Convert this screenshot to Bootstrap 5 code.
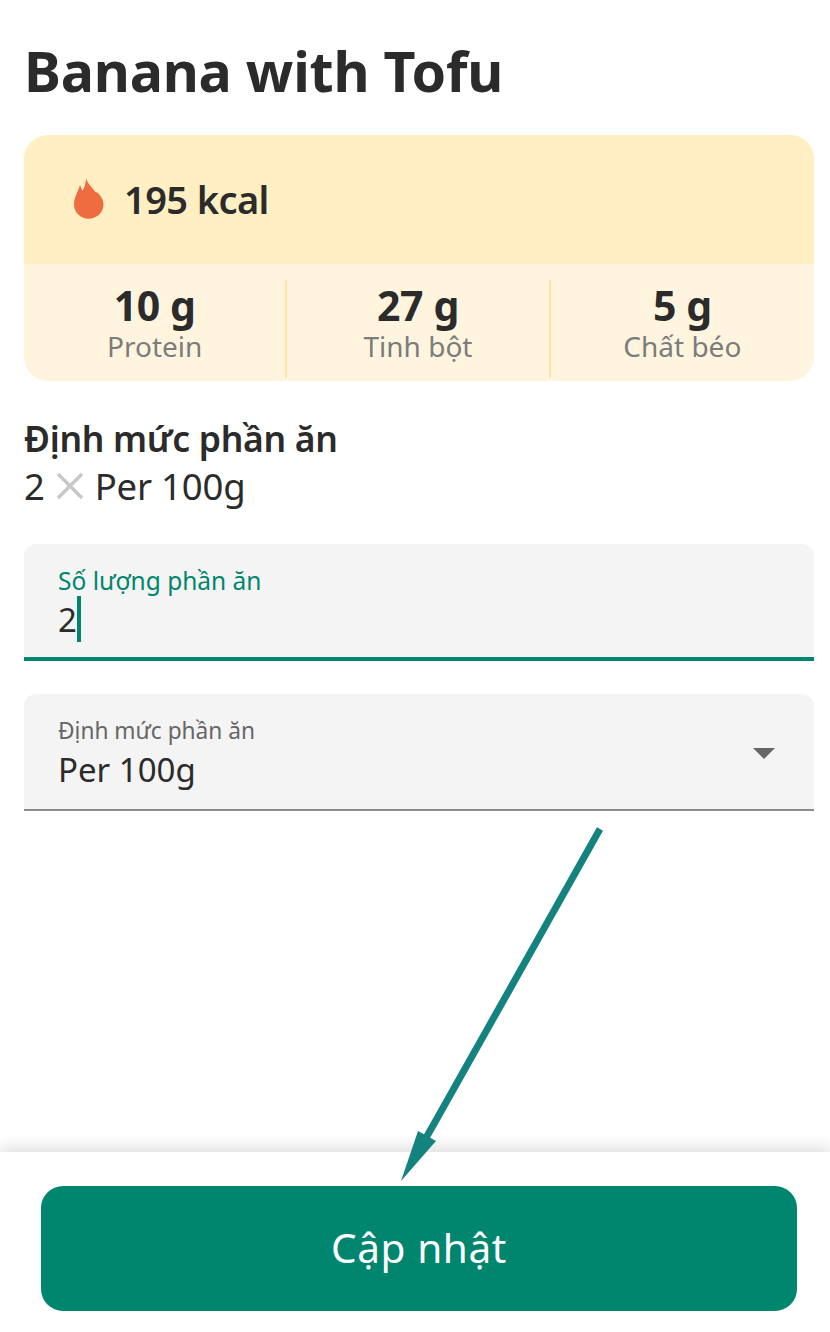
<!DOCTYPE html>
<html lang="vi">
<head>
<meta charset="utf-8">
<title>Banana with Tofu</title>
<link href="https://cdn.jsdelivr.net/npm/bootstrap@5.3.0/dist/css/bootstrap.min.css" rel="stylesheet">
<style>
html,body{margin:0;background:#fff}
body{font-family:"Noto Sans","Liberation Sans",sans-serif;color:#2b2b2b}
.page-wrap{width:830px;height:1332px;position:relative;overflow:hidden}
.main-area{padding:0 16px 0 24px;height:1152px}
.food-title{font-size:55.5px;font-weight:700;line-height:72px;margin:0;padding-top:35px;height:135px;letter-spacing:-.2px}
.nutri-card{height:246px;border-radius:24px;overflow:hidden;background:#fff5de}
.kcal-row{height:129px;background:#ffefc2;padding:0 0 2px 50px;gap:20px}
.kcal-text{font-size:38px;font-weight:600;letter-spacing:-.6px;line-height:1}
.macro-row{height:117px;padding:16px 0 3px}
.macro-cell{width:264px;text-align:center;border-right:2px solid #ffe49e}
.macro-cell:last-child{border-right:0}
.macro-val{font-size:41px;font-weight:700;line-height:40px;margin-top:5px;letter-spacing:-.4px}
.macro-lbl{font-size:28px;line-height:32px;margin-top:5px;color:#7b7c7d}
.serv-head{font-size:35.5px;font-weight:600;line-height:44px;margin-top:35px;letter-spacing:-.3px}
.serv-sub{font-size:36.5px;line-height:48px;margin-top:2px;display:flex;align-items:center;gap:11px;letter-spacing:-.2px}
.fld{height:117px;background:#f4f4f4;border-radius:12px 12px 0 0;padding:21px 34px 0;position:relative}
.fld-on{margin-top:34px;border-bottom:4px solid #00856f}
.fld-sel{margin-top:33px;border-bottom:2px solid #8b8b8b}
.fld-lbl{font-size:24.5px;line-height:32px;color:#00856f}
.fld-sel .fld-lbl{color:#666;font-size:22.7px}
.fld-val{font-size:33px;line-height:42px;margin-top:1px;display:flex;align-items:center}
.fld-sel .fld-val{margin-top:2px}
.caret-bar{width:4px;height:46px;background:#00856f;margin-top:-2px}
.tri{position:absolute;right:39px;top:54px;width:0;height:0;border-left:11px solid transparent;border-right:11px solid transparent;border-top:11px solid #666}
.foot-bar{height:180px;padding:34px 33px 21px 41px;background:#fff;box-shadow:0 -5px 14px rgba(0,0,0,.13)}
.go-btn{width:756px;height:125px;border-radius:22px;background:#00856f;border:0;color:#fff;font-size:40.5px;line-height:1;letter-spacing:.6px}
.go-btn:hover{background:#00856f;color:#fff}
.arrow-over{position:absolute;left:0;top:0;pointer-events:none}
</style>
</head>
<body>
<div class="page-wrap">
  <div class="main-area">
    <h1 class="food-title">Banana with Tofu</h1>
    <div class="nutri-card">
      <div class="kcal-row d-flex align-items-center">
        <svg width="30" height="41" viewBox="0 0 30 41" aria-hidden="true"><path fill="#ef6c41" d="M12 0C13 5 18 9 21 13.5L24 15C27 18 29.5 22 29.5 26.5C29.5 34.5 23 40.7 14.7 40.7C6.5 40.7 0 34.5 0 26.5C0 19 4 14 6 7L8.5 13C10.5 9 12 5 12 0Z"/></svg>
        <span class="kcal-text">195 kcal</span>
      </div>
      <div class="macro-row d-flex">
        <div class="macro-cell"><div class="macro-val">10 g</div><div class="macro-lbl">Protein</div></div>
        <div class="macro-cell"><div class="macro-val">27 g</div><div class="macro-lbl">Tinh bột</div></div>
        <div class="macro-cell"><div class="macro-val">5 g</div><div class="macro-lbl">Chất béo</div></div>
      </div>
    </div>
    <div class="serv-head">Định mức phần ăn</div>
    <div class="serv-sub"><span>2</span><svg width="28" height="28" viewBox="0 0 28 28" aria-hidden="true"><path d="M2 2l24 24M26 2L2 26" stroke="#c8c8c8" stroke-width="3.4" fill="none"/></svg><span>Per 100g</span></div>
    <div class="fld fld-on">
      <div class="fld-lbl">Số lượng phần ăn</div>
      <div class="fld-val"><span>2</span><span class="caret-bar"></span></div>
    </div>
    <div class="fld fld-sel">
      <div class="fld-lbl">Định mức phần ăn</div>
      <div class="fld-val">Per 100g</div>
      <span class="tri"></span>
    </div>
  </div>
  <div class="foot-bar">
    <button type="button" class="btn go-btn">Cập nhật</button>
  </div>
  <svg class="arrow-over" width="830" height="1332" viewBox="0 0 830 1332" aria-hidden="true">
    <line x1="600" y1="829" x2="426" y2="1138" stroke="#14837f" stroke-width="7"/>
    <polygon points="401,1181 418,1131 436,1141" fill="#14837f"/>
  </svg>
</div>
<script src="https://cdn.jsdelivr.net/npm/bootstrap@5.3.0/dist/js/bootstrap.bundle.min.js"></script>
</body>
</html>
